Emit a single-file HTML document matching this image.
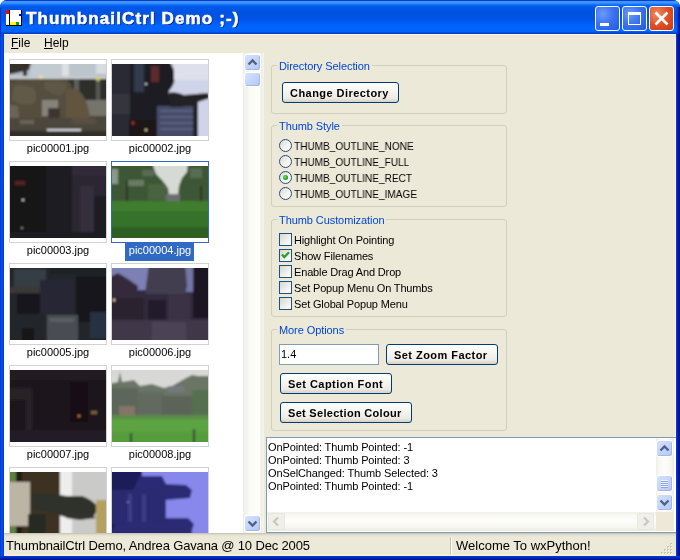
<!DOCTYPE html>
<html><head><meta charset="utf-8">
<style>
*{margin:0;padding:0;box-sizing:border-box}
html,body{width:680px;height:560px;overflow:hidden;background:#fff}
body{position:relative;font-family:"Liberation Sans",sans-serif;font-size:11px;color:#000}
.a{position:absolute}
.t{position:absolute;white-space:nowrap;line-height:1;will-change:transform}
#win{left:0;top:0;width:680px;height:560px;background:#0842d8;border-radius:7px 7px 0 0}
#title{left:0;top:0;width:680px;height:34px;border-radius:7px 7px 0 0;
 background:linear-gradient(#0a3cc8 0px,#0a3cc8 1px,#3d95ff 1px,#3d95ff 3px,#0a6af8 5px,#0058e8 7px,#0052e0 14px,#0054e6 19px,#0062fc 25px,#0066ff 29px,#0060f6 32px,#0040c8 33px,#0040c8 34px)}
#client{left:4px;top:34px;width:672px;height:522px;background:#ece9d8}
.tb{top:6px;width:25px;height:25px;border:1.5px solid #fff;border-radius:3px;
 background:radial-gradient(circle at 30% 30%,#6b9bfa 0,#3c73f0 45%,#2358e0 100%)}
.grp{border:1px solid #d0d0bf;border-radius:3px}
.glabel{color:#0046d5;background:#ece9d8;padding:0 2px}
.btn{border:1px solid #003c74;border-radius:3px;background:linear-gradient(#fff 0%,#f6f5f0 40%,#ecebe4 80%,#d6d0c5 100%);font-weight:bold}
.cb{width:13px;height:13px;border:1px solid #1c5180;background:linear-gradient(135deg,#d6d6d0 0%,#ecece8 50%,#fff 100%)}
.rb{width:13px;height:13px;border:1.5px solid #2a4c7c;border-radius:50%;background:linear-gradient(135deg,#dcdcd6 0%,#f2f2ee 55%,#fff 100%)}
.th{border:1px solid #c9c9c9;background:#fff}
.cap{font-size:11px}
.sbtn{position:absolute;width:17px;height:17px;border:1px solid #fff;border-radius:3px;background:linear-gradient(135deg,#d6e2fe 0%,#c6d6fc 45%,#b4c8f6 100%);box-shadow:inset -1px -1px 0 #a4b8ec}
</style></head><body>
<div id="win" class="a"></div>
<div id="title" class="a"></div>
<!-- app icon -->
<svg class="a" style="left:5px;top:9px" width="18" height="18"><rect x="1" y="1" width="3" height="4" fill="#f00"/><rect x="1" y="5" width="3" height="11" fill="#fff"/><rect x="4" y="1" width="1" height="16" fill="#000"/><rect x="5" y="1" width="11" height="15" fill="#fff"/><rect x="14" y="5" width="2" height="2" fill="#00f"/><rect x="5" y="13" width="6" height="3" fill="#ff0"/><rect x="11" y="13" width="3" height="3" fill="#0a0"/><rect x="16" y="1" width="1" height="16" fill="#000"/><rect x="1" y="16" width="16" height="1" fill="#000"/></svg>
<div class="t" style="left:26px;top:10px;font-size:17px;font-weight:bold;color:#fff;letter-spacing:1.12px;-webkit-text-stroke:0.6px #fff;text-shadow:1px 1px 0 #0a1e80">ThumbnailCtrl Demo ;-)</div>
<!-- title buttons -->
<div class="a tb" style="left:595px"></div>
<div class="a" style="left:600px;top:23px;width:9px;height:3px;background:#fff"></div>
<div class="a tb" style="left:622px"></div>
<div class="a" style="left:628px;top:12px;width:13px;height:13px;border:1.5px solid #fff;border-top-width:3px"></div>
<div class="a tb" style="left:649px;background:radial-gradient(circle at 30% 30%,#f08a60 0,#e24e24 50%,#c83a14 100%)"></div>
<svg class="a" style="left:649px;top:6px" width="25" height="25"><path d="M6.5 6.5L18.5 18.5M18.5 6.5L6.5 18.5" stroke="#fff" stroke-width="2.7"/></svg>

<div id="client" class="a"></div>
<div class="a" style="left:0;top:34px;width:4px;height:526px;background:linear-gradient(90deg,#0028b0 0,#0050ee 1px,#0048e0 3px,#0038d0 4px)"></div>
<div class="a" style="left:0;top:8px;width:1px;height:26px;background:#0030c0"></div>
<div class="a" style="left:676px;top:34px;width:4px;height:526px;background:linear-gradient(90deg,#0044f0 0,#0030d0 1px,#001a98 2px,#000f80 4px)"></div>
<div class="a" style="left:677px;top:7px;width:3px;height:27px;background:linear-gradient(90deg,#0040e0,#0020a0 2px,#001890 3px)"></div>
<div class="a" style="left:0;top:556px;width:680px;height:4px;background:linear-gradient(#0040e8,#0030c8 1px,#001ca0 3px,#001080 4px)"></div>
<div class="a" style="left:675px;top:34px;width:1px;height:522px;background:#fff0d8"></div>
<div class="a" style="left:4px;top:34px;width:672px;height:1px;background:#f6f8ee"></div>
<div class="a" style="left:4px;top:35px;width:672px;height:3px;background:linear-gradient(#efe2d8,#ece6d8)"></div>
<!-- menu -->
<div class="t" style="left:11px;top:37px;font-size:12px"><u>F</u>ile</div>
<div class="t" style="left:44px;top:37px;font-size:12px"><u>H</u>elp</div>

<!-- thumbnail panel -->
<div class="a" style="left:4px;top:53px;width:258px;height:480px;background:#fff"></div>
<div id="thumbs"><svg width="0" height="0" style="position:absolute"><defs><filter id="bl" x="-5%" y="-5%" width="110%" height="110%"><feGaussianBlur stdDeviation="0.9"/></filter></defs></svg>
<div class="a" style="left:9px;top:59px;width:98px;height:82px;border:1px solid #d2d2d2;background:#fff"></div>
<svg class="a" style="left:10px;top:64px" width="96" height="72" viewBox="0 0 96 72"><rect x="-4" y="-4" width="104" height="80" fill="#4a4438"/>
<rect x="-4" y="-4" width="104" height="19" fill="#b2bcc6"/>
<rect x="20" y="-4" width="32" height="17" fill="#c2cad2"/>
<rect x="52" y="-4" width="7" height="18" fill="#dde0e4"/>
<rect x="59" y="-4" width="28" height="17" fill="#bcc4cc"/>
<rect x="86" y="-4" width="14" height="14" fill="#d8dce0"/>
<path d="M-4 -4H22L19 6L6 9L-4 11Z" fill="#30322a"/>
<rect x="13" y="-4" width="4" height="20" fill="#382e26"/>
<rect x="-4" y="12" width="104" height="3" fill="#c6cacc"/>
<rect x="58" y="15" width="42" height="24" fill="#2e2d2a"/>
<rect x="64" y="15" width="5" height="22" fill="#5e5e5a"/>
<rect x="86" y="15" width="4" height="24" fill="#585854"/>
<rect x="74" y="36" width="26" height="16" fill="#74746c"/>
<path d="M-4 22Q4 15 14 15Q24 15 32 16Q44 15 54 15Q62 17 62 24L64 54H-4Z" fill="#554e3e"/>
<path d="M4 22Q14 20 24 24Q28 32 24 40Q10 42 2 36Z" fill="#625a48"/>
<path d="M34 18Q46 16 56 19Q58 28 50 32Q40 30 34 24Z" fill="#5e5646"/>
<path d="M56 26Q66 22 72 30Q78 38 80 54L56 54Z" fill="#62543f"/>
<rect x="32" y="36" width="16" height="16" fill="#86847a"/>
<rect x="38" y="44" width="12" height="12" fill="#3c3630"/>
<path d="M-4 40L8 42L10 60L-4 62Z" fill="#6a6456"/>
<rect x="-4" y="54" width="104" height="11" fill="#4c463c"/>
<rect x="10" y="56" width="14" height="4" fill="#6a6256"/>
<rect x="62" y="54" width="24" height="6" fill="#5a4e42"/>
<rect x="37" y="65" width="34" height="2.5" fill="#d4d8de"/>
<rect x="-4" y="67" width="104" height="9" fill="#302e2a"/>
<circle cx="31" cy="13" r="2" fill="#e8e0a0"/><circle cx="88" cy="15" r="2" fill="#d8d040"/><g filter="url(#bl)"><rect x="-4" y="-4" width="104" height="80" fill="#4a4438"/>
<rect x="-4" y="-4" width="104" height="19" fill="#b2bcc6"/>
<rect x="20" y="-4" width="32" height="17" fill="#c2cad2"/>
<rect x="52" y="-4" width="7" height="18" fill="#dde0e4"/>
<rect x="59" y="-4" width="28" height="17" fill="#bcc4cc"/>
<rect x="86" y="-4" width="14" height="14" fill="#d8dce0"/>
<path d="M-4 -4H22L19 6L6 9L-4 11Z" fill="#30322a"/>
<rect x="13" y="-4" width="4" height="20" fill="#382e26"/>
<rect x="-4" y="12" width="104" height="3" fill="#c6cacc"/>
<rect x="58" y="15" width="42" height="24" fill="#2e2d2a"/>
<rect x="64" y="15" width="5" height="22" fill="#5e5e5a"/>
<rect x="86" y="15" width="4" height="24" fill="#585854"/>
<rect x="74" y="36" width="26" height="16" fill="#74746c"/>
<path d="M-4 22Q4 15 14 15Q24 15 32 16Q44 15 54 15Q62 17 62 24L64 54H-4Z" fill="#554e3e"/>
<path d="M4 22Q14 20 24 24Q28 32 24 40Q10 42 2 36Z" fill="#625a48"/>
<path d="M34 18Q46 16 56 19Q58 28 50 32Q40 30 34 24Z" fill="#5e5646"/>
<path d="M56 26Q66 22 72 30Q78 38 80 54L56 54Z" fill="#62543f"/>
<rect x="32" y="36" width="16" height="16" fill="#86847a"/>
<rect x="38" y="44" width="12" height="12" fill="#3c3630"/>
<path d="M-4 40L8 42L10 60L-4 62Z" fill="#6a6456"/>
<rect x="-4" y="54" width="104" height="11" fill="#4c463c"/>
<rect x="10" y="56" width="14" height="4" fill="#6a6256"/>
<rect x="62" y="54" width="24" height="6" fill="#5a4e42"/>
<rect x="37" y="65" width="34" height="2.5" fill="#d4d8de"/>
<rect x="-4" y="67" width="104" height="9" fill="#302e2a"/>
<circle cx="31" cy="13" r="2" fill="#e8e0a0"/><circle cx="88" cy="15" r="2" fill="#d8d040"/></g></svg>
<div class="t cap" style="left:9px;width:98px;text-align:center;top:143px">pic00001.jpg</div>
<div class="a" style="left:111px;top:59px;width:98px;height:82px;border:1px solid #d2d2d2;background:#fff"></div>
<svg class="a" style="left:112px;top:64px" width="96" height="72" viewBox="0 0 96 72"><rect x="-4" y="-4" width="104" height="80" fill="#1e1c22"/>
<path d="M57 -4H100V76H86V38L80 35L62 32L56 31L57 27Q63 20 63 12Q62 4 57 -4Z" fill="#d0d4e8"/>
<rect x="62" y="-4" width="38" height="20" fill="#dee0ec"/>
<rect x="-4" y="-4" width="22" height="80" fill="#2c2c36"/>
<rect x="22" y="-4" width="10" height="32" fill="#323a4c"/>
<rect x="-4" y="30" width="22" height="20" fill="#34343e"/>
<rect x="45" y="42" width="40" height="34" fill="#454b68"/>
<rect x="48" y="46" width="34" height="2" fill="#5c6282"/><rect x="48" y="52" width="34" height="2" fill="#5c6282"/><rect x="48" y="58" width="34" height="2" fill="#5c6282"/><rect x="48" y="64" width="34" height="2" fill="#5c6282"/>
<path d="M56 29Q64 27 72 31L96 29L98 34L86 38V76H81V40L70 43L58 43Z" fill="#202026"/>
<rect x="17" y="56" width="28" height="20" fill="#1a1618"/>
<rect x="39" y="2" width="8" height="16" fill="#5a2a2e"/>
<circle cx="21" cy="59" r="1.5" fill="#c03030"/><circle cx="34" cy="66" r="1.2" fill="#e0d0a0"/><circle cx="34" cy="20" r="1" fill="#fff"/><g filter="url(#bl)"><rect x="-4" y="-4" width="104" height="80" fill="#1e1c22"/>
<path d="M57 -4H100V76H86V38L80 35L62 32L56 31L57 27Q63 20 63 12Q62 4 57 -4Z" fill="#d0d4e8"/>
<rect x="62" y="-4" width="38" height="20" fill="#dee0ec"/>
<rect x="-4" y="-4" width="22" height="80" fill="#2c2c36"/>
<rect x="22" y="-4" width="10" height="32" fill="#323a4c"/>
<rect x="-4" y="30" width="22" height="20" fill="#34343e"/>
<rect x="45" y="42" width="40" height="34" fill="#454b68"/>
<rect x="48" y="46" width="34" height="2" fill="#5c6282"/><rect x="48" y="52" width="34" height="2" fill="#5c6282"/><rect x="48" y="58" width="34" height="2" fill="#5c6282"/><rect x="48" y="64" width="34" height="2" fill="#5c6282"/>
<path d="M56 29Q64 27 72 31L96 29L98 34L86 38V76H81V40L70 43L58 43Z" fill="#202026"/>
<rect x="17" y="56" width="28" height="20" fill="#1a1618"/>
<rect x="39" y="2" width="8" height="16" fill="#5a2a2e"/>
<circle cx="21" cy="59" r="1.5" fill="#c03030"/><circle cx="34" cy="66" r="1.2" fill="#e0d0a0"/><circle cx="34" cy="20" r="1" fill="#fff"/></g></svg>
<div class="t cap" style="left:111px;width:98px;text-align:center;top:143px">pic00002.jpg</div>
<div class="a" style="left:9px;top:161px;width:98px;height:82px;border:1px solid #d2d2d2;background:#fff"></div>
<svg class="a" style="left:10px;top:166px" width="96" height="72" viewBox="0 0 96 72"><rect x="-4" y="-4" width="104" height="80" fill="#141218"/>
<rect x="36" y="-4" width="64" height="80" fill="#1e1b24"/>
<rect x="62" y="-4" width="38" height="80" fill="#2a2630"/>
<rect x="70" y="20" width="14" height="50" fill="#362f3c"/>
<rect x="84" y="30" width="16" height="36" fill="#1e1a22"/>
<rect x="62" y="-4" width="38" height="14" fill="#322c38"/>
<rect x="5" y="15" width="10" height="4" fill="#5a2222"/>
<rect x="-4" y="66" width="104" height="10" fill="#1c1a20"/>
<circle cx="13" cy="34" r="1.2" fill="#d0d0c8"/><circle cx="12" cy="62" r="1" fill="#a0a090"/><g filter="url(#bl)"><rect x="-4" y="-4" width="104" height="80" fill="#141218"/>
<rect x="36" y="-4" width="64" height="80" fill="#1e1b24"/>
<rect x="62" y="-4" width="38" height="80" fill="#2a2630"/>
<rect x="70" y="20" width="14" height="50" fill="#362f3c"/>
<rect x="84" y="30" width="16" height="36" fill="#1e1a22"/>
<rect x="62" y="-4" width="38" height="14" fill="#322c38"/>
<rect x="5" y="15" width="10" height="4" fill="#5a2222"/>
<rect x="-4" y="66" width="104" height="10" fill="#1c1a20"/>
<circle cx="13" cy="34" r="1.2" fill="#d0d0c8"/><circle cx="12" cy="62" r="1" fill="#a0a090"/></g></svg>
<div class="t cap" style="left:9px;width:98px;text-align:center;top:245px">pic00003.jpg</div>
<div class="a" style="left:111px;top:161px;width:98px;height:82px;border:1px solid #316ac5;background:#fff"></div>
<svg class="a" style="left:112px;top:166px" width="96" height="72" viewBox="0 0 96 72"><rect x="-4" y="-4" width="104" height="80" fill="#367028"/>
<rect x="-4" y="-4" width="104" height="40" fill="#3e5636"/>
<path d="M40 -4H76L75 6L70 12L67 20L66 30L57 30L56 22L50 14L44 8Z" fill="#d6dad4"/>
<rect x="-4" y="3" width="10" height="15" fill="#8a9888"/>
<rect x="14" y="14" width="18" height="6" fill="#6a7a66"/>
<rect x="30" y="4" width="12" height="6" fill="#5a6a56"/>
<rect x="78" y="2" width="12" height="10" fill="#586c52"/>
<rect x="54" y="28" width="14" height="7" fill="#6a7072"/>
<rect x="36" y="18" width="18" height="16" fill="#4a6440"/>
<rect x="14" y="14" width="2" height="22" fill="#283020"/><rect x="88" y="20" width="2" height="17" fill="#283020"/>
<rect x="-4" y="35" width="104" height="10" fill="#3f7d2f"/>
<rect x="-4" y="45" width="104" height="16" fill="#35722a"/>
<rect x="-4" y="61" width="104" height="15" fill="#2d6022"/><g filter="url(#bl)"><rect x="-4" y="-4" width="104" height="80" fill="#367028"/>
<rect x="-4" y="-4" width="104" height="40" fill="#3e5636"/>
<path d="M40 -4H76L75 6L70 12L67 20L66 30L57 30L56 22L50 14L44 8Z" fill="#d6dad4"/>
<rect x="-4" y="3" width="10" height="15" fill="#8a9888"/>
<rect x="14" y="14" width="18" height="6" fill="#6a7a66"/>
<rect x="30" y="4" width="12" height="6" fill="#5a6a56"/>
<rect x="78" y="2" width="12" height="10" fill="#586c52"/>
<rect x="54" y="28" width="14" height="7" fill="#6a7072"/>
<rect x="36" y="18" width="18" height="16" fill="#4a6440"/>
<rect x="14" y="14" width="2" height="22" fill="#283020"/><rect x="88" y="20" width="2" height="17" fill="#283020"/>
<rect x="-4" y="35" width="104" height="10" fill="#3f7d2f"/>
<rect x="-4" y="45" width="104" height="16" fill="#35722a"/>
<rect x="-4" y="61" width="104" height="15" fill="#2d6022"/></g></svg>
<div class="a" style="left:125px;top:243px;width:69px;height:18px;background:#316ac5"></div>
<div class="t cap" style="left:111px;width:98px;text-align:center;top:245px;color:#fff">pic00004.jpg</div>
<div class="a" style="left:9px;top:263px;width:98px;height:82px;border:1px solid #d2d2d2;background:#fff"></div>
<svg class="a" style="left:10px;top:268px" width="96" height="72" viewBox="0 0 96 72"><rect x="-4" y="-4" width="104" height="80" fill="#22252c"/>
<rect x="4" y="1" width="32" height="18" fill="#363c44"/>
<rect x="40" y="-4" width="60" height="10" fill="#1c2026"/>
<rect x="-4" y="19" width="42" height="6" fill="#3a3834"/>
<rect x="7" y="26" width="25" height="20" fill="#14171c"/>
<rect x="30" y="12" width="34" height="34" fill="#262634"/>
<rect x="66" y="8" width="34" height="46" fill="#17191e"/>
<rect x="37" y="47" width="31" height="29" fill="#4a4e52"/>
<rect x="40" y="50" width="24" height="4" fill="#5a5e60"/>
<rect x="80" y="44" width="20" height="26" fill="#283242"/>
<rect x="-4" y="46" width="41" height="30" fill="#24272c"/>
<rect x="12" y="60" width="12" height="14" fill="#121216"/><g filter="url(#bl)"><rect x="-4" y="-4" width="104" height="80" fill="#22252c"/>
<rect x="4" y="1" width="32" height="18" fill="#363c44"/>
<rect x="40" y="-4" width="60" height="10" fill="#1c2026"/>
<rect x="-4" y="19" width="42" height="6" fill="#3a3834"/>
<rect x="7" y="26" width="25" height="20" fill="#14171c"/>
<rect x="30" y="12" width="34" height="34" fill="#262634"/>
<rect x="66" y="8" width="34" height="46" fill="#17191e"/>
<rect x="37" y="47" width="31" height="29" fill="#4a4e52"/>
<rect x="40" y="50" width="24" height="4" fill="#5a5e60"/>
<rect x="80" y="44" width="20" height="26" fill="#283242"/>
<rect x="-4" y="46" width="41" height="30" fill="#24272c"/>
<rect x="12" y="60" width="12" height="14" fill="#121216"/></g></svg>
<div class="t cap" style="left:9px;width:98px;text-align:center;top:347px">pic00005.jpg</div>
<div class="a" style="left:111px;top:263px;width:98px;height:82px;border:1px solid #d2d2d2;background:#fff"></div>
<svg class="a" style="left:112px;top:268px" width="96" height="72" viewBox="0 0 96 72"><rect x="-4" y="-4" width="104" height="80" fill="#332b3e"/>
<rect x="-4" y="-4" width="42" height="26" fill="#7c80b4"/>
<rect x="70" y="-4" width="12" height="28" fill="#7276a8"/>
<path d="M37 -4H73L75 18L73 26H33Z" fill="#423c50"/>
<path d="M-4 10L6 5L16 11L26 18L24 32H-4Z" fill="#352a3a"/>
<rect x="81" y="-4" width="19" height="54" fill="#1c1822"/>
<rect x="-4" y="30" width="36" height="24" fill="#29232f"/>
<rect x="36" y="32" width="18" height="22" fill="#241e2a"/>
<rect x="56" y="26" width="22" height="28" fill="#3a3244"/>
<rect x="-4" y="52" width="104" height="24" fill="#40384a"/>
<rect x="40" y="54" width="34" height="22" fill="#4c4354"/>
<circle cx="2" cy="32" r="1.5" fill="#e0c8b0"/><g filter="url(#bl)"><rect x="-4" y="-4" width="104" height="80" fill="#332b3e"/>
<rect x="-4" y="-4" width="42" height="26" fill="#7c80b4"/>
<rect x="70" y="-4" width="12" height="28" fill="#7276a8"/>
<path d="M37 -4H73L75 18L73 26H33Z" fill="#423c50"/>
<path d="M-4 10L6 5L16 11L26 18L24 32H-4Z" fill="#352a3a"/>
<rect x="81" y="-4" width="19" height="54" fill="#1c1822"/>
<rect x="-4" y="30" width="36" height="24" fill="#29232f"/>
<rect x="36" y="32" width="18" height="22" fill="#241e2a"/>
<rect x="56" y="26" width="22" height="28" fill="#3a3244"/>
<rect x="-4" y="52" width="104" height="24" fill="#40384a"/>
<rect x="40" y="54" width="34" height="22" fill="#4c4354"/>
<circle cx="2" cy="32" r="1.5" fill="#e0c8b0"/></g></svg>
<div class="t cap" style="left:111px;width:98px;text-align:center;top:347px">pic00006.jpg</div>
<div class="a" style="left:9px;top:365px;width:98px;height:82px;border:1px solid #d2d2d2;background:#fff"></div>
<svg class="a" style="left:10px;top:370px" width="96" height="72" viewBox="0 0 96 72"><rect x="-4" y="-4" width="104" height="80" fill="#1b191f"/>
<rect x="-4" y="-4" width="104" height="14" fill="#201e24"/>
<rect x="60" y="12" width="18" height="40" fill="#131117"/>
<rect x="-4" y="18" width="26" height="12" fill="#252127"/>
<rect x="16" y="30" width="6" height="36" fill="#25222a"/>
<rect x="-4" y="60" width="104" height="16" fill="#211f25"/>
<circle cx="69" cy="46" r="1.3" fill="#d08020"/><rect x="81" y="41" width="6" height="3" fill="#806040"/><g filter="url(#bl)"><rect x="-4" y="-4" width="104" height="80" fill="#1b191f"/>
<rect x="-4" y="-4" width="104" height="14" fill="#201e24"/>
<rect x="60" y="12" width="18" height="40" fill="#131117"/>
<rect x="-4" y="18" width="26" height="12" fill="#252127"/>
<rect x="16" y="30" width="6" height="36" fill="#25222a"/>
<rect x="-4" y="60" width="104" height="16" fill="#211f25"/>
<circle cx="69" cy="46" r="1.3" fill="#d08020"/><rect x="81" y="41" width="6" height="3" fill="#806040"/></g></svg>
<div class="t cap" style="left:9px;width:98px;text-align:center;top:449px">pic00007.jpg</div>
<div class="a" style="left:111px;top:365px;width:98px;height:82px;border:1px solid #d2d2d2;background:#fff"></div>
<svg class="a" style="left:112px;top:370px" width="96" height="72" viewBox="0 0 96 72"><rect x="-4" y="-4" width="104" height="80" fill="#667060"/>
<rect x="-4" y="-4" width="104" height="22" fill="#d8d9d6"/>
<path d="M-4 14L6 12L8 2L10 12L22 10L28 16L40 14L52 18L60 16L74 8L80 5L86 6L100 6V48H-4Z" fill="#6a7466"/>
<rect x="-4" y="18" width="30" height="30" fill="#5c665a"/>
<rect x="26" y="22" width="26" height="26" fill="#626a5e"/>
<rect x="56" y="16" width="16" height="6" fill="#74787e"/>
<rect x="50" y="26" width="30" height="22" fill="#5c6458"/>
<rect x="80" y="20" width="20" height="28" fill="#567050"/>
<rect x="7" y="36" width="16" height="11" fill="#847468"/>
<rect x="-4" y="45" width="104" height="5" fill="#5c8c48"/>
<rect x="-4" y="49" width="104" height="27" fill="#5ba343"/>
<rect x="-4" y="62" width="104" height="14" fill="#559c3c"/>
<rect x="18" y="63" width="2" height="10" fill="#303830"/><rect x="81" y="59" width="2" height="14" fill="#303830"/><g filter="url(#bl)"><rect x="-4" y="-4" width="104" height="80" fill="#667060"/>
<rect x="-4" y="-4" width="104" height="22" fill="#d8d9d6"/>
<path d="M-4 14L6 12L8 2L10 12L22 10L28 16L40 14L52 18L60 16L74 8L80 5L86 6L100 6V48H-4Z" fill="#6a7466"/>
<rect x="-4" y="18" width="30" height="30" fill="#5c665a"/>
<rect x="26" y="22" width="26" height="26" fill="#626a5e"/>
<rect x="56" y="16" width="16" height="6" fill="#74787e"/>
<rect x="50" y="26" width="30" height="22" fill="#5c6458"/>
<rect x="80" y="20" width="20" height="28" fill="#567050"/>
<rect x="7" y="36" width="16" height="11" fill="#847468"/>
<rect x="-4" y="45" width="104" height="5" fill="#5c8c48"/>
<rect x="-4" y="49" width="104" height="27" fill="#5ba343"/>
<rect x="-4" y="62" width="104" height="14" fill="#559c3c"/>
<rect x="18" y="63" width="2" height="10" fill="#303830"/><rect x="81" y="59" width="2" height="14" fill="#303830"/></g></svg>
<div class="t cap" style="left:111px;width:98px;text-align:center;top:449px">pic00008.jpg</div>
<div class="a" style="left:9px;top:467px;width:98px;height:82px;border:1px solid #d2d2d2;background:#fff"></div>
<svg class="a" style="left:10px;top:472px" width="96" height="61" viewBox="0 0 96 61"><rect x="-4" y="-4" width="104" height="70" fill="#3e3222"/>
<rect x="-4" y="-4" width="10" height="70" fill="#608040"/>
<rect x="6" y="-4" width="6" height="70" fill="#201e18"/>
<rect x="-4" y="10" width="24" height="44" fill="#bcb4a4"/>
<rect x="50" y="-4" width="12" height="70" fill="#eeeeee"/>
<rect x="62" y="-4" width="38" height="70" fill="#cacac8"/>
<path d="M22 22Q40 20 56 24L72 24Q84 28 88 36L84 44L72 46L58 46L40 40L22 38Z" fill="#2e302c"/>
<path d="M56 40L80 42L86 46L70 48L56 46Z" fill="#30322e"/>
<rect x="86" y="28" width="14" height="36" fill="#b4a060"/>
<rect x="18" y="42" width="18" height="24" fill="#262a22"/><g filter="url(#bl)"><rect x="-4" y="-4" width="104" height="70" fill="#3e3222"/>
<rect x="-4" y="-4" width="10" height="70" fill="#608040"/>
<rect x="6" y="-4" width="6" height="70" fill="#201e18"/>
<rect x="-4" y="10" width="24" height="44" fill="#bcb4a4"/>
<rect x="50" y="-4" width="12" height="70" fill="#eeeeee"/>
<rect x="62" y="-4" width="38" height="70" fill="#cacac8"/>
<path d="M22 22Q40 20 56 24L72 24Q84 28 88 36L84 44L72 46L58 46L40 40L22 38Z" fill="#2e302c"/>
<path d="M56 40L80 42L86 46L70 48L56 46Z" fill="#30322e"/>
<rect x="86" y="28" width="14" height="36" fill="#b4a060"/>
<rect x="18" y="42" width="18" height="24" fill="#262a22"/></g></svg>
<div class="a" style="left:111px;top:467px;width:98px;height:82px;border:1px solid #d2d2d2;background:#fff"></div>
<svg class="a" style="left:112px;top:472px" width="96" height="61" viewBox="0 0 96 61"><rect x="-4" y="-4" width="104" height="70" fill="#8888ec"/>
<rect x="-4" y="-4" width="34" height="70" fill="#1c1c58"/>
<path d="M28 4L50 4L54 12L74 13L80 18L78 26L54 28L54 46L76 46L82 52L80 58L80 66H-4Z" fill="#2c2c74"/>
<rect x="-4" y="18" width="58" height="34" fill="#2a2a70"/>
<rect x="16" y="22" width="4" height="28" fill="#3a3a88"/><rect x="30" y="22" width="4" height="28" fill="#3a3a88"/>
<circle cx="16" cy="30" r="0.8" fill="#e0c080"/><g filter="url(#bl)"><rect x="-4" y="-4" width="104" height="70" fill="#8888ec"/>
<rect x="-4" y="-4" width="34" height="70" fill="#1c1c58"/>
<path d="M28 4L50 4L54 12L74 13L80 18L78 26L54 28L54 46L76 46L82 52L80 58L80 66H-4Z" fill="#2c2c74"/>
<rect x="-4" y="18" width="58" height="34" fill="#2a2a70"/>
<rect x="16" y="22" width="4" height="28" fill="#3a3a88"/><rect x="30" y="22" width="4" height="28" fill="#3a3a88"/>
<circle cx="16" cy="30" r="0.8" fill="#e0c080"/></g></svg>
</div>

<!-- scrollbar -->
<div class="a" style="left:243px;top:53px;width:21px;height:480px;background:linear-gradient(90deg,#e9e9e4 0,#f2f2ee 1px,#f4f4f0 5px,#fafaf6 6px,#fcfdf8 13px,#fdfef8 17px,#e6eae4 18px,#f2f2ec 19px,#f4f3ea 21px)"></div>
<div class="sbtn" style="left:244px;top:54px"></div>
<svg class="a" style="left:244px;top:54px" width="17" height="17"><path d="M4.5 10.5L8.5 6.5L12.5 10.5" fill="none" stroke="#4d6185" stroke-width="2.3"/></svg>
<div class="sbtn" style="left:244px;top:72px;height:15px"></div>
<div class="sbtn" style="left:244px;top:515px"></div>
<svg class="a" style="left:244px;top:515px" width="17" height="17"><path d="M4.5 6.5L8.5 10.5L12.5 6.5" fill="none" stroke="#4d6185" stroke-width="2.3"/></svg>

<!-- right panel groups -->
<div class="a grp" style="left:271px;top:65px;width:236px;height:49px"></div>
<div class="t glabel" style="left:277px;letter-spacing:-0.08px;top:61px">Directory Selection</div>
<div class="a btn" style="left:282px;top:82px;width:117px;height:21px"></div>
<div class="t" style="left:290px;top:88px;font-weight:bold;letter-spacing:0.45px">Change Directory</div>

<div class="a grp" style="left:271px;top:125px;width:236px;height:82px"></div>
<div class="t glabel" style="left:277px;letter-spacing:-0.08px;top:121px">Thumb Style</div>
<div class="a rb" style="left:279px;top:139px"></div>
<div class="a rb" style="left:279px;top:155px"></div>
<div class="a rb" style="left:279px;top:171px"></div>
<div class="a rb" style="left:279px;top:187px"></div>
<div class="a" style="left:283px;top:175px;width:5px;height:5px;border-radius:50%;background:radial-gradient(circle at 40% 40%,#6ee06e,#21a121 60%,#108010)"></div>
<div class="t" style="left:294px;transform:scaleX(0.915);transform-origin:0 0;top:141px">THUMB_OUTLINE_NONE</div>
<div class="t" style="left:294px;transform:scaleX(0.915);transform-origin:0 0;top:157px">THUMB_OUTLINE_FULL</div>
<div class="t" style="left:294px;transform:scaleX(0.915);transform-origin:0 0;top:173px">THUMB_OUTLINE_RECT</div>
<div class="t" style="left:294px;transform:scaleX(0.915);transform-origin:0 0;top:189px">THUMB_OUTLINE_IMAGE</div>

<div class="a grp" style="left:271px;top:219px;width:236px;height:98px"></div>
<div class="t glabel" style="left:277px;letter-spacing:-0.08px;top:215px">Thumb Customization</div>
<div class="a cb" style="left:279px;top:233px"></div>
<div class="a cb" style="left:279px;top:249px"></div>
<div class="a cb" style="left:279px;top:265px"></div>
<svg class="a" style="left:279px;top:249px" width="13" height="13"><path d="M3 5.5L5.3 8.2L10 3.2" fill="none" stroke="#21a121" stroke-width="2.2"/></svg>
<div class="a cb" style="left:279px;top:281px"></div>
<div class="a cb" style="left:279px;top:297px"></div>
<div class="t" style="left:294px;letter-spacing:-0.15px;top:235px">Highlight On Pointing</div>
<div class="t" style="left:294px;letter-spacing:-0.15px;top:251px">Show Filenames</div>
<div class="t" style="left:294px;letter-spacing:-0.15px;top:267px">Enable Drag And Drop</div>
<div class="t" style="left:294px;letter-spacing:-0.15px;top:283px">Set Popup Menu On Thumbs</div>
<div class="t" style="left:294px;letter-spacing:-0.15px;top:299px">Set Global Popup Menu</div>

<div class="a grp" style="left:271px;top:329px;width:236px;height:102px"></div>
<div class="t glabel" style="left:277px;letter-spacing:-0.08px;top:325px">More Options</div>
<div class="a" style="left:279px;top:344px;width:100px;height:21px;border:1px solid #7f9db9;background:#fff"></div>
<div class="t" style="left:281px;top:349px">1.4</div>
<div class="a btn" style="left:386px;top:344px;width:112px;height:21px"></div>
<div class="t" style="left:394px;top:350px;font-weight:bold;letter-spacing:0.45px">Set Zoom Factor</div>
<div class="a btn" style="left:280px;top:373px;width:112px;height:21px"></div>
<div class="t" style="left:288px;top:379px;font-weight:bold;letter-spacing:0.45px">Set Caption Font</div>
<div class="a btn" style="left:280px;top:402px;width:132px;height:21px"></div>
<div class="t" style="left:288px;top:408px;font-weight:bold;letter-spacing:0.3px">Set Selection Colour</div>

<!-- log -->
<div class="a" style="left:266px;top:437px;width:410px;height:96px;border:1px solid #7f9db9;border-right:0;background:#fff"></div>
<div class="t" style="left:268px;letter-spacing:-0.12px;top:442px">OnPointed: Thumb Pointed: -1</div>
<div class="t" style="left:268px;letter-spacing:-0.12px;top:455px">OnPointed: Thumb Pointed: 3</div>
<div class="t" style="left:268px;letter-spacing:-0.12px;top:467.6px">OnSelChanged: Thumb Selected: 3</div>
<div class="t" style="left:268px;letter-spacing:-0.12px;top:480.5px">OnPointed: Thumb Pointed: -1</div>
<div class="a" style="left:656px;top:438px;width:18px;height:74px;background:linear-gradient(90deg,#f0efe8 0,#f8f8f4 3px,#fdfdfb 9px,#f7f6f0 15px,#ecebe2 18px)"></div>
<div class="sbtn" style="left:656px;top:440px"></div>
<svg class="a" style="left:656px;top:440px" width="17" height="17"><path d="M4.5 10.5L8.5 6.5L12.5 10.5" fill="none" stroke="#4d6185" stroke-width="2.3"/></svg>
<div class="sbtn" style="left:656px;top:475px"></div>
<svg class="a" style="left:656px;top:475px" width="17" height="17"><path d="M5 5.5H12M5 7.5H12M5 9.5H12M5 11.5H12" stroke="#eef3fe" stroke-width="1"/><path d="M5 6.5H12M5 8.5H12M5 10.5H12M5 12.5H12" stroke="#8ca5e0" stroke-width="1"/></svg>
<div class="sbtn" style="left:656px;top:494px"></div>
<svg class="a" style="left:656px;top:494px" width="17" height="17"><path d="M4.5 6.5L8.5 10.5L12.5 6.5" fill="none" stroke="#4d6185" stroke-width="2.3"/></svg>
<div class="a" style="left:267px;top:512px;width:389px;height:19px;background:linear-gradient(#f0efe8 0,#f8f8f4 3px,#fdfdfb 9px,#f7f6f0 15px,#ecebe2 19px)"></div>
<div class="a" style="left:637px;top:513px;width:17px;height:17px;border:1px solid #e8e8e0;border-radius:2px;background:#f0efe8"></div>
<svg class="a" style="left:637px;top:513px" width="17" height="17"><path d="M7 4.5L11 8.5L7 12.5" fill="none" stroke="#c8c8c0" stroke-width="2.2"/></svg>
<div class="a" style="left:268px;top:513px;width:17px;height:17px;border:1px solid #e8e8e0;border-radius:2px;background:#f0efe8"></div>
<svg class="a" style="left:268px;top:513px" width="17" height="17"><path d="M10 4.5L6 8.5L10 12.5" fill="none" stroke="#c8c8c0" stroke-width="2.2"/></svg>
<div class="a" style="left:656px;top:512px;width:18px;height:19px;background:#ece9d8"></div>

<!-- status bar -->
<div class="a" style="left:4px;top:533px;width:672px;height:23px;background:linear-gradient(#bdb9ac 0,#d6d2c4 1px,#e4e0d0 2px,#ece9d8 4px,#ece9d8 21px,#f8eed8 22px)"></div>
<div class="a" style="left:450px;top:537px;width:1px;height:18px;background:#c8c5b5"></div>
<div class="a" style="left:451px;top:537px;width:1px;height:18px;background:#fff"></div>
<div class="t" style="left:6px;top:539px;font-size:13px;letter-spacing:-0.15px">ThumbnailCtrl Demo, Andrea Gavana @ 10 Dec 2005</div>
<div class="t" style="left:456px;top:539px;font-size:13px">Welcome To wxPython!</div>
<svg class="a" style="left:660px;top:541px" width="15" height="15"><g fill="#c8c5b5"><rect x="10" y="2" width="2" height="2"/><rect x="7" y="5" width="2" height="2"/><rect x="10" y="5" width="2" height="2"/><rect x="4" y="8" width="2" height="2"/><rect x="7" y="8" width="2" height="2"/><rect x="10" y="8" width="2" height="2"/><rect x="1" y="11" width="2" height="2"/><rect x="4" y="11" width="2" height="2"/><rect x="7" y="11" width="2" height="2"/><rect x="10" y="11" width="2" height="2"/></g><g fill="#fff"><rect x="11" y="3" width="1" height="1"/><rect x="8" y="6" width="1" height="1"/><rect x="11" y="6" width="1" height="1"/><rect x="5" y="9" width="1" height="1"/><rect x="8" y="9" width="1" height="1"/><rect x="11" y="9" width="1" height="1"/><rect x="2" y="12" width="1" height="1"/><rect x="5" y="12" width="1" height="1"/><rect x="8" y="12" width="1" height="1"/><rect x="11" y="12" width="1" height="1"/></g></svg>
</body></html>
